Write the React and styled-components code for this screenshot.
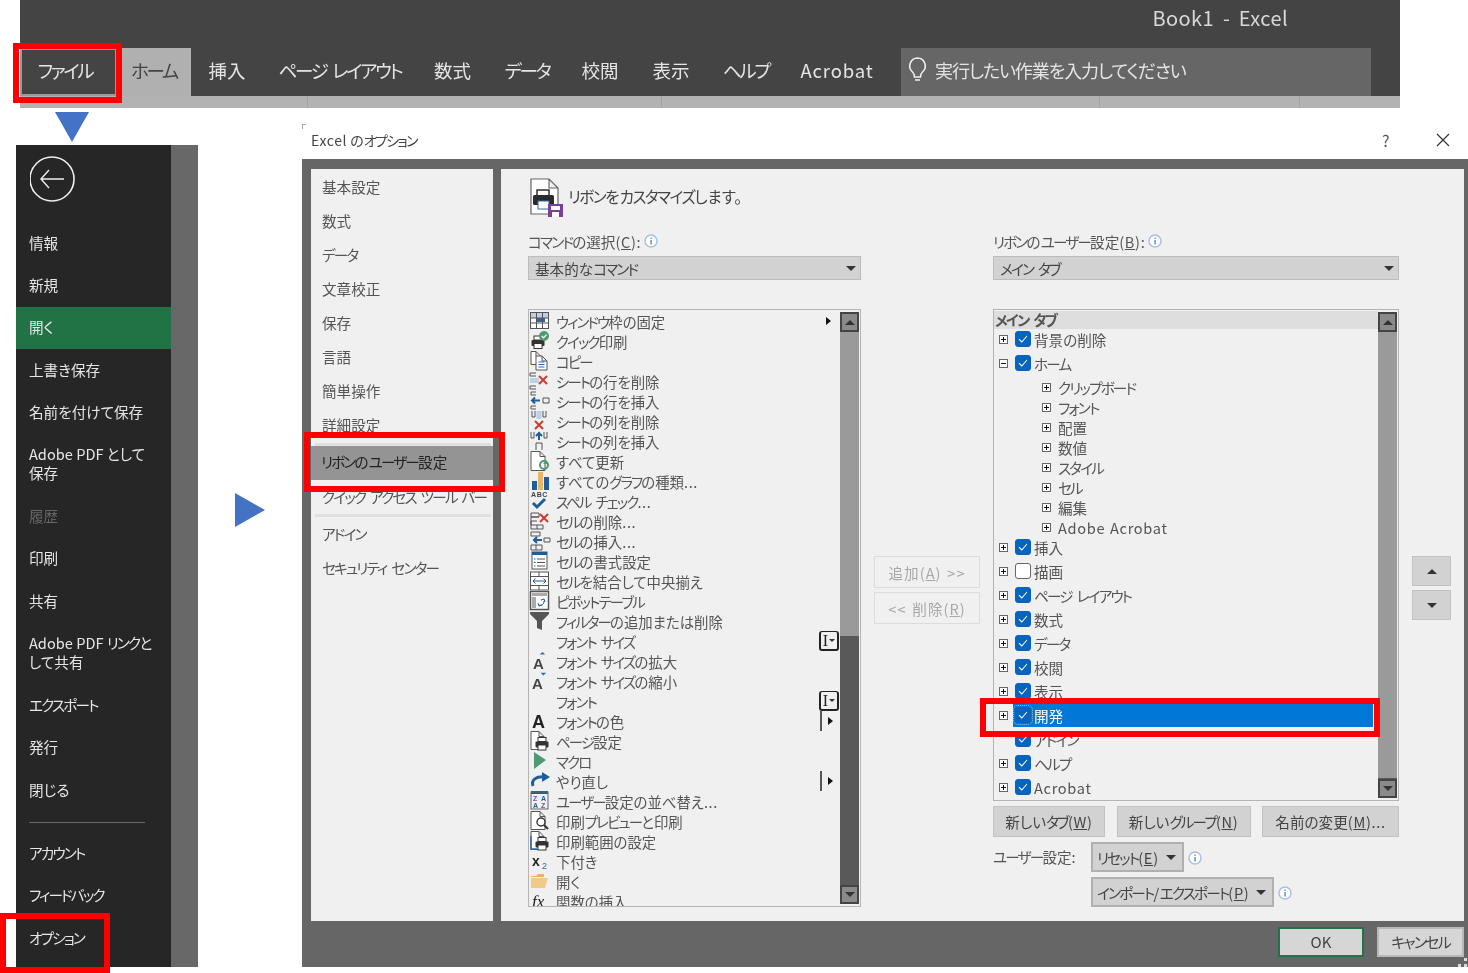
import React from "react";
import styled, { createGlobalStyle } from "styled-components";

const GlobalStyle = createGlobalStyle`
  html, body {
    margin: 0;
    padding: 0;
    background: #fff;
  }
  * {
    box-sizing: border-box;
  }
  body {
    font-family: "Noto Sans CJK JP", "Noto Sans", sans-serif;
    font-feature-settings: "palt";
    word-spacing: 0.1em;
    color: #444;
  }
`;

/* the reference is an enlarged shot, so everything is a little soft */
const Page = styled.div`
  position: relative;
  width: 1468px;
  height: 973px;
  overflow: hidden;
  background: #fff;
  filter: blur(0.3px);
`;

/* the shot uses Meiryo UI, whose katakana is narrow and latin wide */
const Kana = styled.span`
  letter-spacing: -0.125em;
`;
const Latin = styled.span`
  letter-spacing: 0.045em;
`;

const J = ({ children }) => (
  <span>
    {children.split(/(&.|[\u30A1-\u30FC]+|[A-Za-z0-9()/.<>]+)/).map((part, i) => {
      if (!part) return null;
      if (part[0] === "&")
        return (
          <Latin key={i}>
            <u>{part[1]}</u>
          </Latin>
        );
      if (/^[\u30A1-\u30FC]/.test(part)) return <Kana key={i}>{part}</Kana>;
      if (/^[A-Za-z0-9()/.<>]/.test(part)) return <Latin key={i}>{part}</Latin>;
      return part;
    })}
  </span>
);

/* ---- ribbon ---- */
const Ribbon = styled.div`
  width: 1380px;
  height: 108px;
  margin-left: 20px;
  background: #444;
  display: flex;
  flex-direction: column;
`;
const TitleRow = styled.div`
  height: 48px;
  padding: 4px 112px 0 0;
  text-align: right;
  color: #d8d8d8;
  font-size: 20px;
  line-height: 28px;
  white-space: pre;
  word-spacing: 0;
  ${Latin} {
    letter-spacing: 0.02em;
  }
`;
const TabRow = styled.div`
  height: 48px;
  display: flex;
`;
const Tab = styled.div`
  width: ${(p) => p.$w}px;
  display: flex;
  align-items: center;
  justify-content: center;
  padding: 0 ${(p) => (p.$file ? 7 : 0)}px 4px 0;
  font-size: 18.5px;
  white-space: pre;
  color: ${(p) => (p.$active ? "#444" : "#e4e4e4")};
  background: ${(p) => (p.$active ? "#b0b0b0" : "transparent")};
  border: ${(p) => (p.$file ? "2px solid #9a9a9a" : "none")};
`;
const SearchBox = styled.div`
  width: 470px;
  margin-left: 11px;
  background: #666;
  display: flex;
  align-items: center;
  gap: 7px;
  padding: 0 0 4px 6px;
  color: #e4e4e4;
  font-size: 18px;
  letter-spacing: -1.1px;
`;
const ToolStrip = styled.div`
  flex: 1;
  background: #b2b2b2;
  display: flex;
`;
const StripCell = styled.div`
  width: ${(p) => p.$w}px;
  border-right: 1px solid #a2a2a2;
`;

/* ---- lower part ---- */
const Workspace = styled.div`
  display: flex;
`;
const LeftColumn = styled.div`
  width: 182px;
  margin-left: 16px;
`;
const DownArrow = styled.div`
  width: 0;
  height: 0;
  margin: 4px 0 3px 39px;
  border-left: 17px solid transparent;
  border-right: 17px solid transparent;
  border-top: 30px solid #4472c4;
`;
const Backstage = styled.div`
  height: 822px;
  display: grid;
  grid-template-columns: 155px 27px;
`;
const BackstageMenu = styled.div`
  background: #262626;
  display: flex;
  flex-direction: column;
`;
const BackstageSide = styled.div`
  background: #686868;
`;
const BackButton = styled.div`
  height: 77px;
  padding: 11px 0 0 14px;
`;
const MenuItem = styled.div`
  display: flex;
  align-items: center;
  height: ${(p) => (p.$tall ? 62 : 42.3)}px;
  padding: 0 8px 2px 13px;
  font-size: 14.6px;
  line-height: 19px;
  word-spacing: 0;
  color: ${(p) => (p.$dim ? "#666" : "#e6e6e6")};
  background: ${(p) => (p.$active ? "#217346" : "transparent")};
  ${Latin} {
    letter-spacing: 0;
  }
`;
const MenuText = styled.div`
  white-space: pre-line;
`;
const MenuRule = styled.div`
  height: 1px;
  margin: 11px 26px 9px 13px;
  background: #666;
`;
const Gutter = styled.div`
  width: 104px;
  padding: 385px 0 0 37px;
`;
const RightArrow = styled.div`
  width: 0;
  height: 0;
  border-top: 17px solid transparent;
  border-bottom: 17px solid transparent;
  border-left: 30px solid #4472c4;
`;

/* ---- dialog ---- */
const Dialog = styled.div`
  width: 1166px;
  height: 843px;
  margin-top: 16px;
  display: flex;
  flex-direction: column;
`;
const DialogTitle = styled.div`
  position: relative;
  height: 35px;
  display: flex;
  align-items: center;
  padding: 0 18px 4px 9px;
  font-size: 14px;
  word-spacing: 0;
  color: #444;
  background: #fff;
  &::before {
    content: "";
    position: absolute;
    left: 0;
    top: 0;
    width: 3px;
    height: 4px;
    border-left: 1px solid #aaa;
    border-top: 1px solid #aaa;
  }
`;
const TitleText = styled.div`
  flex: 1;
`;
const HelpMark = styled.div`
  width: 54px;
  font-size: 16px;
  color: #555;
`;
const DialogBody = styled.div`
  position: relative;
  flex: 1;
  background: #666;
  padding: 10px 4px 0 9px;
  display: flex;
  flex-direction: column;
`;
const ResizeGrip = styled.svg`
  position: absolute;
  right: 1px;
  bottom: 0;
`;
const Panels = styled.div`
  height: 752px;
  display: grid;
  grid-template-columns: 182px 963px;
  gap: 8px;
`;
const SideNav = styled.div`
  background: #f0f0f0;
  display: flex;
  flex-direction: column;
  padding-top: 1px;
`;
const NavItem = styled.div`
  height: 34px;
  flex: none;
  display: flex;
  align-items: center;
  padding: 0 0 ${(p) => (p.$active ? 3 : 2)}px ${(p) => (p.$active ? 10 : 11)}px;
  font-size: 14.6px;
  white-space: pre;
  background: ${(p) => (p.$active ? "#949494" : "transparent")};
  color: ${(p) => (p.$active ? "#222" : "#555")};
`;
const NavRule = styled.div`
  height: 3px;
  flex: none;
  margin: 0 2px 0 4px;
  background: #e0e0e0;
  margin-top: ${(p) => p.$top || 0}px;
`;
const Main = styled.div`
  background: #f0f0f0;
  padding: 9px 0 0 27px;
`;
const MainHeader = styled.div`
  height: 53px;
  display: flex;
  gap: 3px;
  font-size: 15.5px;
  color: #444;
`;
const HeaderText = styled.div`
  margin-top: 8px;
  line-height: 20px;
  ${Kana} {
    letter-spacing: -0.09em;
  }
`;
const Columns = styled.div`
  display: flex;
  align-items: flex-start;
`;
const Column = styled.div`
  width: ${(p) => p.$w}px;
  flex: none;
`;
const FieldLabel = styled.div`
  height: 20px;
  display: flex;
  align-items: center;
  gap: 3px;
  font-size: 14.6px;
  color: #555;
`;
const Select = styled.div`
  height: 24px;
  margin-top: 5px;
  display: flex;
  align-items: center;
  justify-content: space-between;
  padding: 0 4px 0 6px;
  background: #d2d2d2;
  border: 1px solid #bcbcbc;
  font-size: 14.6px;
  color: #444;
`;
const Caret = styled.span`
  display: block;
  flex: none;
  width: 0;
  height: 0;
  border-left: ${(p) => p.$s || 5}px solid transparent;
  border-right: ${(p) => p.$s || 5}px solid transparent;
  border-top: ${(p) => p.$s || 5}px solid #333;
  ${(p) => (p.$up ? `transform: rotate(180deg);` : "")}
`;
const ListBox = styled.div`
  position: relative;
  height: ${(p) => p.$h}px;
  margin-top: 29px;
  border: 1px solid #b4b4b4;
  background: #f0f0f0;
  overflow: hidden;
  padding-top: 1px;
`;
const ScrollBar = styled.div`
  position: absolute;
  top: 2px;
  right: 1px;
  bottom: 2px;
  width: 19px;
  display: flex;
  flex-direction: column;
  background: #595959;
`;
const ScrollButton = styled.div`
  height: ${(p) => p.$h}px;
  flex: none;
  background: #8a8a8a;
  border: 2px solid #444;
  display: flex;
  align-items: center;
  justify-content: center;
`;
const ScrollThumb = styled.div`
  height: ${(p) => p.$h}px;
  flex: none;
  background: #9a9a9a;
`;
const ScrollTrack = styled.div`
  flex: 1;
`;
const CommandRow = styled.div`
  height: 20px;
  padding-right: 21px;
  display: flex;
  align-items: center;
  font-size: 14.4px;
  color: #555;
  white-space: pre;
`;
const CommandIcon = styled.div`
  width: 27px;
  height: 20px;
  flex: none;
  svg {
    display: block;
  }
`;
const CommandText = styled.div`
  flex: 1;
`;
const SplitArrow = styled.div`
  width: 18px;
  height: 20px;
  flex: none;
  display: flex;
  align-items: center;
  border-left: ${(p) => (p.$line ? "2px solid #555" : "none")};
  padding-left: 6px;
  margin-right: 1px;
`;
const TriRight = styled.span`
  display: block;
  width: 0;
  height: 0;
  border-top: 4px solid transparent;
  border-bottom: 4px solid transparent;
  border-left: 5px solid #111;
`;
const InputMark = styled.div`
  width: 20px;
  height: 20px;
  flex: none;
  border: 2px solid #222;
  border-width: 1px 2px 2px 2px;
  border-radius: 3px;
  display: flex;
  align-items: center;
  justify-content: center;
  gap: 1px;
  font: 16px "Liberation Serif", serif;
  color: #222;
`;

const MiddleColumn = styled.div`
  width: 132px;
  flex: none;
  padding: 325px 13px 0;
  display: flex;
  flex-direction: column;
  gap: 4px;
`;
const MoveButton = styled.div`
  height: 32px;
  display: flex;
  align-items: center;
  justify-content: center;
  border: 1px solid #dcdcdc;
  font-size: 14.6px;
  color: #a8a8a8;
  white-space: pre;
  letter-spacing: 1px;
  ${Latin} {
    letter-spacing: 1px;
  }
`;
const TreeHeader = styled.div`
  height: 18px;
  margin-right: 20px;
  padding-left: 1px;
  background: #dedede;
  font-size: 14.4px;
  font-weight: 700;
  line-height: 18px;
  color: #555;
`;
const TreeBody = styled.div`
  margin-top: -2px;
`;
const TreeRow = styled.div`
  position: relative;
  height: ${(p) => (p.$sub ? 20 : 24)}px;
  margin-right: 20px;
  display: flex;
  align-items: center;
  padding-left: ${(p) => (p.$sub ? 48 : 5)}px;
  font-size: 14.6px;
  color: #555;
  white-space: pre;
`;
const SubGroup = styled.div`
  margin: 2px 0 -2px;
`;
const Expander = styled.span`
  position: relative;
  width: 9px;
  height: 9px;
  flex: none;
  margin-right: 7px;
  border: 1px solid #666;
  background: #fff;
  display: flex;
  align-items: center;
  justify-content: center;
  svg {
    display: block;
  }
`;
const ExpanderGap = styled.span`
  width: 16px;
  flex: none;
`;
const CheckBox = styled.span`
  position: relative;
  width: 16px;
  height: 16px;
  flex: none;
  margin-right: 3px;
  border-radius: 3px;
  background: ${(p) => (p.$on ? "#0563c1" : "#fff")};
  border: 1px solid ${(p) => (p.$on ? "#0563c1" : "#666")};
  display: flex;
  align-items: center;
  justify-content: center;
  ${(p) => (p.$focus ? "outline: 1px dotted #9fb7cf; outline-offset: 1px;" : "")}
`;
const SelectedFill = styled.div`
  position: absolute;
  top: 0;
  bottom: 0;
  left: 19px;
  right: 5px;
  background: #0078d7;
`;
const SelectedText = styled.span`
  position: relative;
  color: #fff;
`;
const ButtonRow = styled.div`
  display: flex;
  justify-content: space-between;
  margin-top: 5px;
`;
const PlainButton = styled.div`
  width: ${(p) => p.$w}px;
  height: 31px;
  display: flex;
  align-items: center;
  justify-content: center;
  background: #d2d2d2;
  border: 1px solid #c2c2c2;
  font-size: 14.6px;
  color: #444;
  white-space: pre;
`;
const UserRow = styled.div`
  display: flex;
  align-items: flex-start;
  gap: 3px;
  height: 30px;
  margin-top: 5px;
  padding-left: ${(p) => p.$indent || 0}px;
`;
const UserLabel = styled.div`
  width: 95px;
  line-height: 30px;
  font-size: 14.6px;
  color: #555;
`;
const DropButton = styled.div`
  width: ${(p) => p.$w}px;
  height: 30px;
  display: flex;
  align-items: center;
  justify-content: space-between;
  padding: 0 6px 0 4px;
  background: #d2d2d2;
  border: 2px solid #b0b0b0;
  font-size: 14.6px;
  color: #444;
  white-space: pre;
`;
const InfoSlot = styled.div`
  margin-top: 4px;
  margin-left: 1px;
`;
const SideColumn = styled.div`
  width: 39px;
  margin-left: 13px;
  padding-top: 325px;
  display: flex;
  flex-direction: column;
  gap: 4px;
`;
const ArrowButton = styled.div`
  height: 30px;
  background: #d2d2d2;
  border: 1px solid #c2c2c2;
  display: flex;
  align-items: center;
  justify-content: center;
`;
const Footer = styled.div`
  display: flex;
  justify-content: flex-end;
  align-items: flex-start;
  gap: 13px;
  padding-top: 6px;
`;
const FooterButton = styled.div`
  width: ${(p) => p.$w}px;
  height: 30px;
  display: flex;
  align-items: center;
  justify-content: center;
  padding-bottom: 2px;
  background: #d6d6d6;
  border: 2px solid ${(p) => (p.$primary ? "#217346" : "#b8b8b8")};
  font-size: 15px;
  color: #444;
`;

/* red marks drawn over the shot */
const Highlight = styled.div`
  position: absolute;
  left: ${(p) => p.$x}px;
  top: ${(p) => p.$y}px;
  width: ${(p) => p.$w}px;
  height: ${(p) => p.$h}px;
  border: 6px solid #f00;
  pointer-events: none;
`;

/* ---- drawings ---- */
const Info = () => (
  <svg width="14" height="14" viewBox="0 0 14 14">
    <circle cx="7" cy="7" r="6" fill="#fff" stroke="#a8bfe0" strokeWidth="1.4" />
    <rect x="6.4" y="6" width="1.3" height="4.5" fill="#4f81bd" />
    <rect x="6.4" y="3.5" width="1.3" height="1.4" fill="#4f81bd" />
  </svg>
);

const Tick = () => (
  <svg width="12" height="10" viewBox="0 0 12 10">
    <path d="M2 5.2 L4.8 8 L10 2" fill="none" stroke="#fff" strokeWidth="1.1" />
  </svg>
);

const Sign = ({ minus }) => (
  <svg width="7" height="7" viewBox="0 0 7 7">
    <rect x="1" y="3" width="5" height="1" fill="#111" />
    {!minus && <rect x="3" y="1" width="1" height="5" fill="#111" />}
  </svg>
);

const Printer = ({ x = 0, y = 0 }) => (
  <g transform={`translate(${x} ${y})`}>
    <rect x="3" y="0" width="8" height="4" fill="#fff" stroke="#333" />
    <rect x="0.5" y="4" width="13" height="6" rx="1" fill="#333" />
    <rect x="3" y="7.5" width="8" height="5" fill="#fff" stroke="#333" />
  </g>
);

const Doc = ({ x = 3, y = 0.5, w = 13, h = 18 }) => (
  <path
    d={`M${x} ${y} h${w - 5} l5 5 v${h - 5} h-${w} z M${x + w - 5} ${y} v5 h5`}
    fill="#fff"
    stroke="#555"
  />
);

const RedX = ({ x, y, s = 8 }) => (
  <path d={`M${x} ${y} l${s} ${s} M${x + s} ${y} l-${s} ${s}`} stroke="#d13a2b" strokeWidth="2" fill="none" />
);

const Cells = ({ d }) => <path d={d} fill="none" stroke="#555" strokeWidth="1" />;

const icons = {
  freeze: (
    <>
      <rect x="1.5" y="1.5" width="18" height="16" fill="#fff" stroke="#555" />
      <rect x="2" y="2" width="17" height="5" fill="#bcd0e8" />
      <rect x="8" y="7" width="8" height="4" fill="#2e6aa8" />
      <path d="M1.5 7h18M1.5 12h18M7.5 1.5v16M13.5 1.5v16" stroke="#555" fill="none" />
    </>
  ),
  quick: (
    <>
      <Printer x={2} y={5} />
      <circle cx="15" cy="5" r="5" fill="#4f9a73" />
      <path d="M12.7 5l1.8 1.8 3-3.2" stroke="#fff" fill="none" strokeWidth="1.2" />
    </>
  ),
  copy: (
    <>
      <Doc x={2} y={0.5} w={10} h={13} />
      <Doc x={7} y={5} w={11} h={14} />
      <path d="M9.5 11h6M9.5 13.5h6M9.5 16h6" stroke="#2e6aa8" />
    </>
  ),
  delRow: (
    <>
      <Cells d="M7 2H1v3h6M7 15H1v3h6" />
      <rect x="1" y="7" width="9" height="5" fill="#bcd0e8" />
      <RedX x={10} y={5} />
    </>
  ),
  insRow: (
    <>
      <Cells d="M7 1H2v3h5M7 15H2v3h5M14 7h6v5h-6z" />
      <path d="M11 9.5H3M6 6.5l-3 3 3 3" stroke="#1f5c99" strokeWidth="2" fill="none" />
    </>
  ),
  delCol: (
    <>
      <Cells d="M3 0v6h3V0M14 0v6h3V0" />
      <rect x="7.5" y="0" width="5" height="8" fill="#bcd0e8" />
      <RedX x={6} y={10} />
    </>
  ),
  insCol: (
    <>
      <Cells d="M2 1v6h3V1M15 1v6h3V1M7 19v-7h6v7" />
      <path d="M10 9V2M7 5l3-3 3 3" stroke="#1f5c99" strokeWidth="2" fill="none" />
    </>
  ),
  refresh: (
    <>
      <Doc x={2} y={0.5} w={14} h={19} />
      <circle cx="15" cy="14" r="4" fill="none" stroke="#4f9a73" strokeWidth="2" />
      <path d="M18 9v4h-4" fill="#4f9a73" />
    </>
  ),
  chart: (
    <>
      <rect x="3" y="10" width="5" height="9" fill="#1f5c99" />
      <rect x="9" y="1" width="5" height="18" fill="#e8b565" />
      <rect x="15" y="6" width="5" height="13" fill="#1f5c99" />
    </>
  ),
  spell: (
    <>
      <text x="2" y="6" fontSize="7" fontFamily="Liberation Sans" fontWeight="700" fill="#444" letterSpacing="0.6">
        ABC
      </text>
      <path d="M4 12l4 4 8-8" stroke="#1f5c99" strokeWidth="3" fill="none" />
    </>
  ),
  delCell: (
    <>
      <Cells d="M2 2h8v4H2zM2 6h8M2 6v4h6M2 10v4h12v4H2zM8 14v4" />
      <RedX x={11} y={3} />
    </>
  ),
  insCell: (
    <>
      <Cells d="M2 1h9v4H2zM2 14h11v5H2zM7 14v5M15 7h6v4h-6z" />
      <path d="M13 9H5M8 6L5 9l3 3" stroke="#1f5c99" strokeWidth="2" fill="none" />
    </>
  ),
  format: (
    <>
      <rect x="3" y="1" width="15" height="17" fill="#fff" stroke="#555" />
      <rect x="3" y="1" width="15" height="3" fill="#1f5c99" />
      <path d="M8 8h8M8 11.5h8M8 15h8" stroke="#555" />
      <path d="M5 8h1.5M5 11.5h1.5M5 15h1.5" stroke="#1f5c99" />
    </>
  ),
  merge: (
    <>
      <rect x="1.5" y="1" width="18" height="18" fill="#fff" stroke="#555" />
      <path d="M1.5 5.5h18M1.5 14.5h18M10 1v4M10 15v4" stroke="#555" />
      <path d="M4 10h13M6.5 7.5L4 10l2.5 2.5M14.5 7.5L17 10l-2.5 2.5" stroke="#1f5c99" fill="none" />
    </>
  ),
  pivot: (
    <>
      <rect x="1.5" y="0.5" width="18" height="18" fill="#fff" stroke="#555" strokeWidth="1.5" />
      <rect x="3" y="2" width="15" height="3" fill="#aaa" />
      <rect x="3" y="6" width="4" height="11" fill="#aaa" />
      <path d="M10 14c3 1 5-1 5-4M12 9l3-1 1 3M9 12l1 3 3-1" stroke="#1f5c99" fill="none" />
    </>
  ),
  filter: <path d="M1 1h19v2l-7 7v9l-5-2v-7L1 3z" fill="#555" />,
  grow: (
    <>
      <text x="4" y="18" fontSize="15" fontFamily="Liberation Sans" fontWeight="700" fill="#444">
        A
      </text>
      <path d="M12 4l3-3 3 3z" fill="#2e6aa8" transform="scale(0.9)" />
    </>
  ),
  shrink: (
    <>
      <text x="3" y="18" fontSize="15" fontFamily="Liberation Sans" fontWeight="700" fill="#444">
        A
      </text>
      <path d="M13 2h6l-3 3z" fill="#2e6aa8" transform="scale(0.9)" />
    </>
  ),
  color: (
    <text x="3" y="17" fontSize="18" fontFamily="Liberation Sans" fontWeight="700" fill="#222">
      A
    </text>
  ),
  page: (
    <>
      <Doc x={2} y={0.5} w={13} h={18} />
      <Printer x={6} y={6.5} />
    </>
  ),
  macro: <path d="M5 1l12 8-12 9z" fill="#4f9a73" />,
  redo: (
    <>
      <path d="M4 15c-2-6 3-10 12-9" stroke="#1f5c99" strokeWidth="3" fill="none" />
      <path d="M13 1l8 5-8 5z" fill="#1f5c99" />
    </>
  ),
  sort: (
    <>
      <rect x="2" y="0" width="17" height="3" fill="#1f5c99" />
      <rect x="2" y="1" width="17" height="17" fill="none" stroke="#666" />
      <text x="4" y="9.5" fontSize="7" fontFamily="Liberation Sans" fontWeight="700" fill="#7a4fa0">Z</text>
      <text x="4" y="16.5" fontSize="7" fontFamily="Liberation Sans" fontWeight="700" fill="#1f5c99">A</text>
      <text x="12" y="9.5" fontSize="7" fontFamily="Liberation Sans" fontWeight="700" fill="#1f5c99">A</text>
      <text x="12" y="16.5" fontSize="7" fontFamily="Liberation Sans" fontWeight="700" fill="#7a4fa0">Z</text>
    </>
  ),
  preview: (
    <>
      <Doc x={2} y={0.5} w={14} h={18} />
      <circle cx="12" cy="11" r="4" fill="#fff" stroke="#333" strokeWidth="1.4" />
      <path d="M15 14l4 4" stroke="#333" strokeWidth="2" />
    </>
  ),
  area: (
    <>
      <Doc x={2} y={0.5} w={13} h={18} />
      <path d="M2 5v13h6" stroke="#2e6aa8" fill="none" strokeWidth="1.5" />
      <Printer x={6} y={6.5} />
    </>
  ),
  sub: (
    <>
      <text x="3" y="15" fontSize="14" fontFamily="Liberation Sans" fontWeight="700" fill="#222">x</text>
      <text x="13" y="18" fontSize="9" fontFamily="Liberation Sans" fill="#2e6aa8">2</text>
    </>
  ),
  open: (
    <>
      <path d="M2 5h5l2-2h6v3H2z" fill="#e8b565" />
      <path d="M2 17V7h17l-3 10z" fill="#f2c987" />
    </>
  ),
  fx: (
    <text x="3" y="16" fontSize="17" fontFamily="Liberation Serif" fontStyle="italic" fill="#222">
      fx
    </text>
  ),
};

const commands = [
  { icon: "freeze", text: "ウィンドウ枠の固定", tail: "arrow" },
  { icon: "quick", text: "クイック印刷" },
  { icon: "copy", text: "コピー" },
  { icon: "delRow", text: "シートの行を削除" },
  { icon: "insRow", text: "シートの行を挿入" },
  { icon: "delCol", text: "シートの列を削除" },
  { icon: "insCol", text: "シートの列を挿入" },
  { icon: "refresh", text: "すべて更新" },
  { icon: "chart", text: "すべてのグラフの種類..." },
  { icon: "spell", text: "スペル チェック..." },
  { icon: "delCell", text: "セルの削除..." },
  { icon: "insCell", text: "セルの挿入..." },
  { icon: "format", text: "セルの書式設定" },
  { icon: "merge", text: "セルを結合して中央揃え" },
  { icon: "pivot", text: "ピボットテーブル" },
  { icon: "filter", text: "フィルターの追加または削除" },
  { text: "フォント サイズ", tail: "input" },
  { icon: "grow", text: "フォント サイズの拡大" },
  { icon: "shrink", text: "フォント サイズの縮小" },
  { text: "フォント", tail: "input" },
  { icon: "color", text: "フォントの色", tail: "split" },
  { icon: "page", text: "ページ設定" },
  { icon: "macro", text: "マクロ" },
  { icon: "redo", text: "やり直し", tail: "split" },
  { icon: "sort", text: "ユーザー設定の並べ替え..." },
  { icon: "preview", text: "印刷プレビューと印刷" },
  { icon: "area", text: "印刷範囲の設定" },
  { icon: "sub", text: "下付き" },
  { icon: "open", text: "開く" },
  { icon: "fx", text: "関数の挿入..." },
];

const tabs = [
  ["ホーム", 74, true],
  ["挿入", 72],
  ["ページ レイアウト", 154],
  ["数式", 71],
  ["データ", 78],
  ["校閲", 68],
  ["表示", 74],
  ["ヘルプ", 76],
  ["Acrobat", 106],
];

const backstageTop = [
  { label: "情報" },
  { label: "新規" },
  { label: "開く", active: true },
  { label: "上書き保存" },
  { label: "名前を付けて保存" },
  { label: "Adobe PDF として\n保存", tall: true },
  { label: "履歴", dim: true },
  { label: "印刷" },
  { label: "共有" },
  { label: "Adobe PDF リンクと\nして共有", tall: true },
  { label: "エクスポート" },
  { label: "発行" },
  { label: "閉じる" },
];

const navTop = ["基本設定", "数式", "データ", "文章校正", "保存", "言語", "簡単操作", "詳細設定"];

const subItems = ["クリップボード", "フォント", "配置", "数値", "スタイル", "セル", "編集", "Adobe Acrobat"];

const mainTail = [
  { label: "挿入", on: true },
  { label: "描画", on: false },
  { label: "ページ レイアウト", on: true },
  { label: "数式", on: true },
  { label: "データ", on: true },
  { label: "校閲", on: true },
  { label: "表示", on: true },
];

const TopRow = ({ label, on = true, minus, noSign }) => (
  <TreeRow>
    {noSign ? (
      <ExpanderGap />
    ) : (
      <Expander>
        <Sign minus={minus} />
      </Expander>
    )}
    <CheckBox $on={on}>{on && <Tick />}</CheckBox>
    <J>{label}</J>
  </TreeRow>
);

const Tail = ({ kind }) => {
  if (kind === "arrow")
    return (
      <SplitArrow>
        <TriRight />
      </SplitArrow>
    );
  if (kind === "input")
    return (
      <InputMark>
        <span>I</span>
        <Caret $s={3} />
      </InputMark>
    );
  if (kind === "split")
    return (
      <SplitArrow $line>
        <TriRight />
      </SplitArrow>
    );
  return null;
};

const Bar = ({ thumb }) => (
  <ScrollBar>
    <ScrollButton $h={20}>
      <Caret $up />
    </ScrollButton>
    <ScrollThumb $h={thumb} />
    <ScrollTrack />
    <ScrollButton $h={19}>
      <Caret />
    </ScrollButton>
  </ScrollBar>
);

export default function App() {
  return (
    <Page>
      <GlobalStyle />
      <Ribbon>
        <TitleRow>
          <J>Book1  -  Excel</J>
        </TitleRow>
        <TabRow>
          <Tab $w={97} $file>
            <J>ファイル</J>
          </Tab>
          {tabs.map(([label, w, active]) => (
            <Tab key={label} $w={w} $active={active}>
              <J>{label}</J>
            </Tab>
          ))}
          <SearchBox>
            <svg width="21" height="28" viewBox="0 0 21 28">
              <path
                d="M10.5 2a8 8 0 0 0-5 14c1.500 1.300 2 3 2 5h6c0-2 .5-3.700 2-5a8 8 0 0 0-5-14z M8 24h5"
                fill="none"
                stroke="#eee"
                strokeWidth="1.6"
              />
            </svg>
            実行したい作業を入力してください
          </SearchBox>
        </TabRow>
        <ToolStrip>
          <StripCell $w={288} />
          <StripCell $w={354} />
          <StripCell $w={438} />
          <StripCell $w={200} />
        </ToolStrip>
      </Ribbon>

      <Workspace>
        <LeftColumn>
          <DownArrow />
          <Backstage>
            <BackstageMenu>
              <BackButton>
                <svg width="46" height="46" viewBox="0 0 46 46">
                  <circle cx="22" cy="23" r="22" fill="none" stroke="#eee" strokeWidth="1.6" />
                  <path d="M11 23h23M19 14l-8 9 8 9" fill="none" stroke="#eee" strokeWidth="1.4" />
                </svg>
              </BackButton>
              {backstageTop.map((m) => (
                <MenuItem key={m.label} $active={m.active} $dim={m.dim} $tall={m.tall}>
                  <MenuText>
                    <J>{m.label}</J>
                  </MenuText>
                </MenuItem>
              ))}
              <MenuRule />
              <MenuItem>
                <J>アカウント</J>
              </MenuItem>
              <MenuItem>
                <J>フィードバック</J>
              </MenuItem>
              <MenuItem>
                <J>オプション</J>
              </MenuItem>
            </BackstageMenu>
            <BackstageSide />
          </Backstage>
        </LeftColumn>

        <Gutter>
          <RightArrow />
        </Gutter>

        <Dialog>
          <DialogTitle>
            <TitleText>
              <J>Excel のオプション</J>
            </TitleText>
            <HelpMark>?</HelpMark>
            <svg width="14" height="14" viewBox="0 0 14 14">
              <path d="M1 1l12 12M13 1L1 13" stroke="#333" strokeWidth="1.2" />
            </svg>
          </DialogTitle>
          <DialogBody>
            <Panels>
              <SideNav>
                {navTop.map((n) => (
                  <NavItem key={n}>
                    <J>{n}</J>
                  </NavItem>
                ))}
                <NavRule $top={1} />
                <NavItem $active>
                  <J>リボンのユーザー設定</J>
                </NavItem>
                <NavItem>
                  <J>クイック アクセス ツール バー</J>
                </NavItem>
                <NavRule />
                <NavItem>
                  <J>アドイン</J>
                </NavItem>
                <NavItem>
                  <J>セキュリティ センター</J>
                </NavItem>
              </SideNav>

              <Main>
                <MainHeader>
                  <svg width="37" height="40" viewBox="0 0 37 40">
                    <path d="M3 1h18l9 9v26H3z M21 1v9h9" fill="#fff" stroke="#666" strokeWidth="1.2" />
                    <rect x="9" y="12" width="12" height="6" fill="#fff" stroke="#222" strokeWidth="1.4" />
                    <rect x="5" y="17" width="21" height="10" rx="1.5" fill="#2b2b2b" />
                    <rect x="10" y="23" width="11" height="8" fill="#fff" stroke="#2e6aa8" />
                    <rect x="20" y="26" width="15" height="13" fill="#7a3f9d" />
                    <rect x="23" y="28" width="9" height="4" fill="#fff" />
                    <rect x="24" y="34" width="7" height="5" fill="#fff" />
                  </svg>
                  <HeaderText>
                    <J>リボンをカスタマイズします。</J>
                  </HeaderText>
                </MainHeader>
                <Columns>
                  <Column $w={333}>
                    <FieldLabel>
                      <span>
                        <J>コマンドの選択(&C):</J>
                      </span>
                      <Info />
                    </FieldLabel>
                    <Select>
                      <span>
                        <J>基本的なコマンド</J>
                      </span>
                      <Caret />
                    </Select>
                    <ListBox $h={598}>
                      {commands.map((c) => (
                        <CommandRow key={c.text}>
                          <CommandIcon>
                            {c.icon && (
                              <svg width="22" height="20" viewBox="0 0 22 20">
                                {icons[c.icon]}
                              </svg>
                            )}
                          </CommandIcon>
                          <CommandText>
                            <J>{c.text}</J>
                          </CommandText>
                          <Tail kind={c.tail} />
                        </CommandRow>
                      ))}
                      <Bar thumb={304} />
                    </ListBox>
                  </Column>

                  <MiddleColumn>
                    <MoveButton>
                      <J>追加(&A) &gt;&gt;</J>
                    </MoveButton>
                    <MoveButton>
                      <J>&lt;&lt; 削除(&R)</J>
                    </MoveButton>
                  </MiddleColumn>

                  <Column $w={406}>
                    <FieldLabel>
                      <span>
                        <J>リボンのユーザー設定(&B):</J>
                      </span>
                      <Info />
                    </FieldLabel>
                    <Select>
                      <span>
                        <J>メイン タブ</J>
                      </span>
                      <Caret />
                    </Select>
                    <ListBox $h={492}>
                      <TreeHeader>
                        <J>メイン タブ</J>
                      </TreeHeader>
                      <TreeBody>
                        <TopRow label="背景の削除" />
                        <TopRow label="ホーム" minus />
                        <SubGroup>
                          {subItems.map((s) => (
                            <TreeRow key={s} $sub>
                              <Expander>
                                <Sign />
                              </Expander>
                              <J>{s}</J>
                            </TreeRow>
                          ))}
                        </SubGroup>
                        {mainTail.map((m) => (
                          <TopRow key={m.label} label={m.label} on={m.on} />
                        ))}
                        <TreeRow>
                          <SelectedFill />
                          <Expander>
                            <Sign />
                          </Expander>
                          <CheckBox $on $focus>
                            <Tick />
                          </CheckBox>
                          <SelectedText>開発</SelectedText>
                        </TreeRow>
                        <TopRow label="アドイン" noSign />
                        <TopRow label="ヘルプ" />
                        <TopRow label="Acrobat" />
                      </TreeBody>
                      <Bar thumb={446} />
                    </ListBox>
                    <ButtonRow>
                      <PlainButton $w={112}>
                        <J>新しいタブ(&W)</J>
                      </PlainButton>
                      <PlainButton $w={134}>
                        <J>新しいグループ(&N)</J>
                      </PlainButton>
                      <PlainButton $w={137}>
                        <J>名前の変更(&M)...</J>
                      </PlainButton>
                    </ButtonRow>
                    <UserRow>
                      <UserLabel>
                        <J>ユーザー設定:</J>
                      </UserLabel>
                      <DropButton $w={93}>
                        <span>
                          <J>リセット(&E)</J>
                        </span>
                        <Caret />
                      </DropButton>
                      <InfoSlot>
                        <Info />
                      </InfoSlot>
                    </UserRow>
                    <UserRow $indent={98}>
                      <DropButton $w={183}>
                        <span>
                          <J>インポート/エクスポート(&P)</J>
                        </span>
                        <Caret />
                      </DropButton>
                      <InfoSlot>
                        <Info />
                      </InfoSlot>
                    </UserRow>
                  </Column>

                  <SideColumn>
                    <ArrowButton>
                      <Caret $up />
                    </ArrowButton>
                    <ArrowButton>
                      <Caret />
                    </ArrowButton>
                  </SideColumn>
                </Columns>
              </Main>
            </Panels>
            <Footer>
              <FooterButton $w={86} $primary>
                OK
              </FooterButton>
              <FooterButton $w={87}>
                <J>キャンセル</J>
              </FooterButton>
            </Footer>
            <ResizeGrip width="9" height="9" viewBox="0 0 9 9">
              <path d="M6 0h3v3H6zM0 6h3v3H0zM6 6h3v3H6z" fill="#ddd" />
            </ResizeGrip>
          </DialogBody>
        </Dialog>
      </Workspace>

      <Highlight $x={13} $y={43} $w={109} $h={60} />
      <Highlight $x={0} $y={913} $w={110} $h={60} />
      <Highlight $x={304} $y={432} $w={201} $h={60} />
      <Highlight $x={980} $y={698} $w={400} $h={39} />
    </Page>
  );
}
